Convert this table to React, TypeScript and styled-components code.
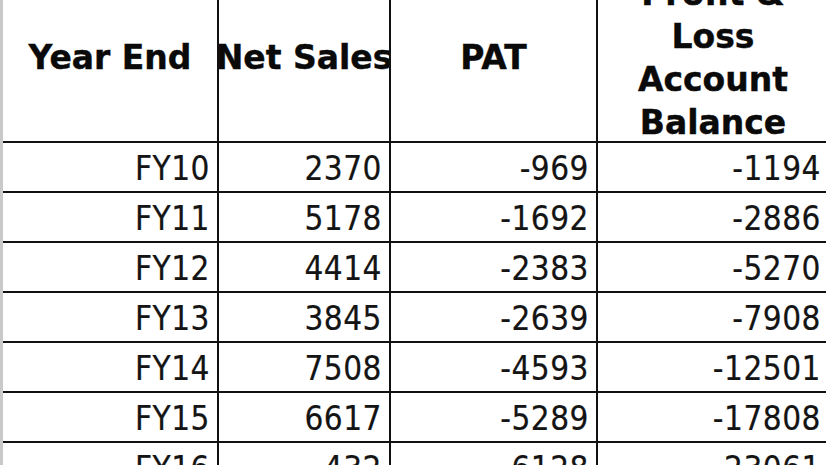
import styled, { createGlobalStyle } from "styled-components";

const GlobalStyle = createGlobalStyle`
  html, body {
    margin: 0;
    padding: 0;
    background: #fff;
    overflow: hidden;
  }
`;

const rows = [
  ["FY10", "2370", "-969", "-1194"],
  ["FY11", "5178", "-1692", "-2886"],
  ["FY12", "4414", "-2383", "-5270"],
  ["FY13", "3845", "-2639", "-7908"],
  ["FY14", "7508", "-4593", "-12501"],
  ["FY15", "6617", "-5289", "-17808"],
  ["FY16", "432", "-6128", "-23061"],
];

const Viewport = styled.div`
  width: 826px;
  height: 465px;
  overflow: hidden;
  border-left: 3px solid #c9c9c9;
  box-sizing: border-box;
`;

const Sheet = styled.div`
  display: grid;
  grid-template-columns: 216px 172px 207px 232px;
  grid-template-rows: 174px;
  grid-auto-rows: 50px;
  margin-top: -31px;
  width: max-content;
`;

const HeaderCell = styled.div`
  display: flex;
  align-items: center;
  justify-content: center;
  overflow: hidden;
  box-sizing: border-box;
  border-right: 2px solid #111;
  border-bottom: 2px solid #111;
  padding-top: 5px;
  font-family: "DejaVu Sans", Verdana, sans-serif;
  font-weight: bold;
  font-size: 33px;
  line-height: 43px;
  color: #0a0a0a;
  -webkit-text-stroke: 0.4px #0a0a0a;
  text-align: center;
  white-space: nowrap;
`;

const DataCell = styled.div`
  display: flex;
  align-items: center;
  justify-content: flex-end;
  box-sizing: border-box;
  border-right: 2px solid #111;
  border-bottom: 2px solid #111;
  padding: 2px 7px 0 0;
  font-family: "DejaVu Sans Condensed", "DejaVu Sans", Tahoma, sans-serif;
  font-size: 33px;
  letter-spacing: 0.5px;
  color: #141414;
  -webkit-text-stroke: 0.2px #141414;
  white-space: nowrap;
`;

export default function App() {
  return (
    <Viewport>
      <GlobalStyle />
      <Sheet>
        <HeaderCell>Year End</HeaderCell>
        <HeaderCell>Net Sales</HeaderCell>
        <HeaderCell>PAT</HeaderCell>
        <HeaderCell>
          Profit &amp;
          <br />
          Loss
          <br />
          Account
          <br />
          Balance
        </HeaderCell>
        {rows.map((row) =>
          row.map((value, i) => <DataCell key={row[0] + i}>{value}</DataCell>)
        )}
      </Sheet>
    </Viewport>
  );
}
